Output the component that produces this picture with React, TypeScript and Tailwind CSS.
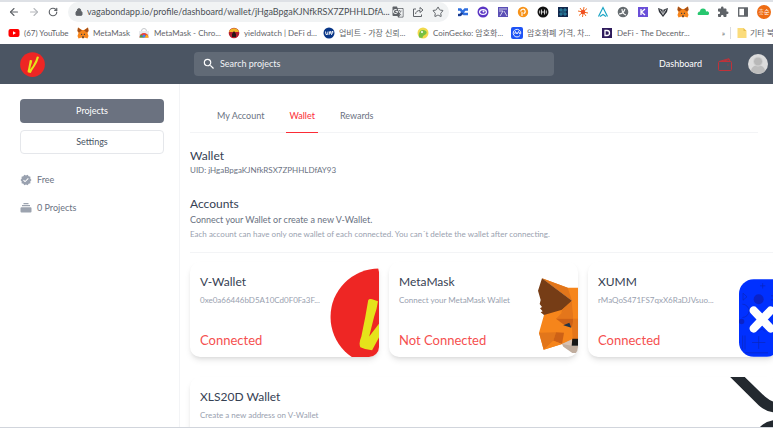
import type { ReactNode } from "react";
import { ArrowLeft, ArrowRight, Lock, RotateCw, Star } from "lucide-react";
import { MdExtension, MdGTranslate, MdSearch, MdVerified } from "react-icons/md";

function VLogo({ className, viewBox = "0 0 100 100" }: { className: string; viewBox?: string }) {
  return (
    <svg viewBox={viewBox} className={className} aria-hidden="true">
      <circle cx="50" cy="50" r="49.5" fill="#ee2624" />
      <path
        d="M39 33Q40 31 43 32L49 34Q48 42 45 50L40 70L50 57L62 34L67 19Q71 16 76 20Q70 42 60 56L50 71L43 84Q37 84 31 81Q29 77 32 70L36 50Z"
        fill="#e5e31b"
      />
    </svg>
  );
}

function FoxIcon() {
  return (
    <svg viewBox="0 0 24 24" className="size-3" aria-hidden="true">
      <path d="M2 1l8 5h4l8-5 1 7-2 4 2 6-2 5-6-2-2 2h-2l-2-2-6 2-2-5 2-6-2-4z" fill="#f6851b" />
      <path d="M2 1l8 6-6 4-3-3zM22 1l-8 6 6 4 3-3z" fill="#a4501a" />
      <path d="M8 13l3 2-3 1zM16 13l-3 2 3 1zM10 19h4l-1 3h-2z" fill="#233447" />
    </svg>
  );
}

function FoxArt() {
  return (
    <svg viewBox="474 100 120 225" className="mb-1 h-[75px] w-10 shrink-0 self-end" aria-hidden="true">
      <path d="M486 101L563 129H594V222L530 222L492 210L576 168Z" fill="#f6851b" />
      <path d="M486 101L563 129L576 168Z" fill="#e2761b" />
      <path d="M492 211L546 195L594 180V300L546 298L491 315L477 264Z" fill="#f6851b" />
      <path d="M486 101L576 168L546 195L492 211L482 203L488 200L480 191L486 187L479 178L482 166L474 138Z" fill="#763d16" />
      <path d="M546 195L576 168L560 192L544 206Z" fill="#e2761b" />
      <path d="M477 264L528 263L520 288L491 315Z" fill="#e2761b" />
      <path d="M528 263L552 264L546 298L520 288Z" fill="#cd6116" />
      <path d="M528 222L560 190L576 168L580 222Z" fill="#e4761b" />
      <path d="M528 222H580L578 248L552 240Z" fill="#cd6116" />
      <path d="M576 168L594 180V222H580Z" fill="#f6851b" />
      <path d="M580 222H594V282H578L576 250Z" fill="#e4761b" />
      <path d="M550 242L568 234L574 249Z" fill="#233447" />
      <path d="M491 315L520 288L546 298Z" fill="#f6851b" />
      <path d="M546 298L576 285V303H594V325H577L550 306Z" fill="#c0ad9e" />
      <path d="M546 298L576 284V303Z" fill="#d7c1b3" />
      <path d="M577 282H594V303H575Z" fill="#161616" />
    </svg>
  );
}

function XummArt() {
  return (
    <svg viewBox="506 105 114 233" className="h-[78px] w-[38px] shrink-0 self-end" aria-hidden="true">
      <rect x="506" y="105" width="233" height="233" rx="44" fill="#0030ff" />
      <g fill="none" stroke="#0a26b8" strokeWidth="2">
        <path d="M577 117v16M569 125h16M518 147l12 11-12 10zM516 180a20 20 0 0 1 0 40M602 155h18M602 167h18" />
        <path d="M565 276v38M545 295h40M517 274v42M524 274v42M525 326h68" />
        <path d="M560 262l16-8 8 8" />
      </g>
      <circle cx="565" cy="165" r="15" fill="#0a22c8" />
      <circle cx="514" cy="232" r="8" fill="#0a22c8" />
      <path d="M550 199L601 253M601 199L550 253" stroke="#fff" strokeWidth="25" strokeLinecap="round" />
    </svg>
  );
}

function XrpArt() {
  return (
    <svg viewBox="480 397 141 151" className="h-[50px] w-[47px] shrink-0" aria-hidden="true">
      <path d="M480 397H524L586 457Q602 471 621 474V505Q588 503 566 482Z" fill="#23292f" />
      <path d="M570 548Q588 529 621 526V548Z" fill="#23292f" />
    </svg>
  );
}

function Glyph({ children }: { children: ReactNode }) {
  return (
    <svg viewBox="0 0 12 12" className="size-3" aria-hidden="true">
      {children}
    </svg>
  );
}

const extensions: { name: string; icon: ReactNode }[] = [
  { name: "Swap", icon: <Glyph><path d="M1 3.500h2.500L7 8h4M1 9h2l5-5.500h3" fill="none" stroke="#2f6fe0" strokeWidth="2.400" /><path d="M1 9h2.500l2-2" fill="none" stroke="#1b3b8c" strokeWidth="2" /></Glyph> },
  { name: "Orbit", icon: <Glyph><circle cx="6" cy="6" r="5.500" fill="#5a35c4" /><ellipse cx="6" cy="6" rx="3.400" ry="2.400" fill="none" stroke="#fff" strokeWidth="1.200" /><circle cx="6.500" cy="5.500" r="1" fill="#fff" /></Glyph> },
  { name: "Grid", icon: <Glyph><path d="M1 1h10v10H1z" fill="#5a4fb5" /><path d="M2 3h8M2 5h4M7 5l3 5M3 10l3-5" stroke="#fff" strokeWidth=".7" fill="none" /></Glyph> },
  { name: "Pin", icon: <Glyph><circle cx="6" cy="6" r="5.200" fill="#f7931a" /><path d="M5 10V6M3.800 5.500a2.200 2.200 0 1 1 2.700 2" fill="none" stroke="#fff" strokeWidth="1.100" /></Glyph> },
  { name: "Hashpack", icon: <Glyph><circle cx="6" cy="6" r="5.500" fill="#111" /><path d="M4.500 3.500v5M7.500 3.500v5M4.500 6h3M2.700 4.500v3M9.300 4.500v3" stroke="#fff" strokeWidth=".8" /></Glyph> },
  { name: "Robot", icon: <Glyph><path d="M1 1h10v10H1z" fill="#12284c" /><path d="M3 3h2v2H3zM7 3h2v2H7zM3 7h2v2H3zM7 7h2v2H7zM5 6h2" fill="none" stroke="#3dc3df" strokeWidth=".6" /></Glyph> },
  { name: "Spark", icon: <Glyph><path d="M7 1L5.500 11M1 5l10 2M3 2l6 8M10 2.500l-8 7" stroke="#f26a21" strokeWidth="1" /><circle cx="6" cy="6" r="2.200" fill="#f04e23" /></Glyph> },
  { name: "Argent", icon: <Glyph><path d="M1.500 10.500L6 1.500l4.500 9M3 10.500l3-2 3 2" fill="none" stroke="#19a5c5" strokeWidth="1.200" /></Glyph> },
  { name: "Keplr", icon: <Glyph><circle cx="6" cy="6" r="5.300" fill="#666c70" /><path d="M2 8c3 0 5-2 6-5M5 3c0 3 1 5 4 6" stroke="#fff" strokeWidth="1.100" fill="none" /></Glyph> },
  { name: "Kaikas", icon: <Glyph><path d="M1 1h10v10H1z" fill="#6a4fd8" /><path d="M4 3v6M8 3L4.500 6 8 9" stroke="#fff" strokeWidth="1.300" fill="none" /></Glyph> },
  { name: "Venom", icon: <Glyph><path d="M1 2l3 1 2 1 2-1 3-1-1 4-4 5-4-5z" fill="#30343b" /><path d="M3 3.500l3 5 3-5M6 4v3" stroke="#fff" strokeWidth=".7" fill="none" /></Glyph> },
  { name: "MetaMask", icon: <FoxIcon /> },
  { name: "Cloud", icon: <Glyph><path d="M1 9a2.300 2.300 0 0 1 2-3.500 3 3 0 0 1 6 0A2 2 0 0 1 11 9z" fill="#27c76f" /></Glyph> },
  { name: "Extensions", icon: <MdExtension className="size-3 text-[#5f6368]" /> },
  { name: "Side panel", icon: <Glyph><path d="M1.700 2h8.600v8H1.700z" fill="none" stroke="#5f6368" strokeWidth="1.300" /><path d="M7 2h3.500v8H7z" fill="#5f6368" /></Glyph> },
];

const bookmarks: { label: string; width: string; icon: ReactNode }[] = [
  { label: "(67) YouTube", width: "w-[69px]", icon: <Glyph><rect x=".5" y="2" width="11" height="8" rx="2" fill="#f00" /><path d="M5 4.300L8 6 5 7.700z" fill="#fff" /></Glyph> },
  { label: "MetaMask", width: "w-[61px]", icon: <FoxIcon /> },
  { label: "MetaMask - Chro...", width: "w-[90px]", icon: <Glyph><path d="M1 4h10v6.500H1z" fill="#e8eaed" /><path d="M3.500 4a2.500 2.500 0 0 1 5 0" fill="none" stroke="#c5c8cc" /><path d="M1.500 10.500a4.500 4.500 0 0 1 9 0z" fill="#ea4335" /><path d="M1.500 10.500L3 7.500l3 3z" fill="#34a853" /><path d="M10.500 10.500L9 7.500l-3 3z" fill="#fbbc04" /><circle cx="6" cy="9" r="1.500" fill="#4285f4" /></Glyph> },
  { label: "yieldwatch | DeFi d...", width: "w-[95px]", icon: <Glyph><circle cx="6" cy="6" r="5.300" fill="#b5202d" /><path d="M1 5a5.200 5.200 0 0 1 10 0z" fill="#f1b52a" /><path d="M4 10V7l2-3 2 3v3z" fill="#2a1717" /></Glyph> },
  { label: "업비트 - 가장 신뢰...", width: "w-[94px]", icon: <Glyph><circle cx="6" cy="6" r="5.500" fill="#093687" /><path d="M2.500 4.500L3 7.500h1.500l.5-3M6 8l.7-3.500h1L7 7M8.500 8l.5-3.500h1L9.500 6.500" fill="none" stroke="#fff" strokeWidth=".9" /></Glyph> },
  { label: "CoinGecko: 암호화...", width: "w-[94px]", icon: <Glyph><circle cx="6" cy="6" r="5.500" fill="#f0d94c" /><path d="M2 10.500C1.500 6 3 2.500 6.500 3c3 .5 4 2.500 2.500 4S6 8 5.500 11z" fill="#76c043" /><circle cx="5" cy="5" r="1" fill="#fff" /></Glyph> },
  { label: "암호화폐 가격, 차...", width: "w-[90px]", icon: <Glyph><rect width="12" height="12" rx="2" fill="#1e53f5" /><path d="M9 8.500A3.800 3.800 0 1 1 9.800 6c0 1.500-1.500 1.500-1.500 0L7.500 4.500 6 7 4.500 4.500 3.700 7" fill="none" stroke="#fff" strokeWidth=".9" /></Glyph> },
  { label: "DeFi - The Decentr...", width: "w-[116px]", icon: <Glyph><path d="M1 1h10v10H1z" fill="#2f1c5c" /><path d="M4 3.500h2a2.500 2.500 0 0 1 0 5H4z" fill="none" stroke="#fff" strokeWidth="1.300" /></Glyph> },
];

function BrowserBar() {
  return (
    <div className="border-t-2 border-[#dee1e6] bg-white text-[#5f6368]">
      <div className="flex h-5 items-center">
        <div className="flex w-[68px] shrink-0 items-center gap-2 pl-2">
          <button aria-label="Back"><ArrowLeft className="size-3" strokeWidth={2.2} /></button>
          <button aria-label="Forward" className="text-[#b5b8bc]"><ArrowRight className="size-3" strokeWidth={2.2} /></button>
          <button aria-label="Reload"><RotateCw className="size-[10px]" strokeWidth={2.8} /></button>
        </div>
        <div className="flex h-5 min-w-0 flex-1 items-center rounded-full bg-[#f1f3f4] pr-[5px] pl-[7px]">
          <Lock className="size-2 shrink-0 fill-current" strokeWidth={3} />
          <input
            aria-label="Address"
            readOnly
            className="ml-1 min-w-0 flex-1 text-[9px] text-[#4b4f54] outline-none"
            defaultValue="vagabondapp.io/profile/dashboard/wallet/jHgaBpgaKJNfkRSX7ZPHHLDfA..."
          />
          <div className="flex shrink-0 items-center gap-2">
            <button aria-label="Translate"><MdGTranslate className="size-3" /></button>
            <button aria-label="Share">
              <Glyph>
                <path d="M4 3H1.500v7.500h8V8.500M3.500 8C4 5.500 5.500 4.500 8 4.500M8 4.500V6.500L11 4 8 1.500v2" fill="none" stroke="#5f6368" />
              </Glyph>
            </button>
            <button aria-label="Bookmark"><Star className="size-3" /></button>
          </div>
        </div>
        <div className="flex shrink-0 items-center gap-2 pr-[2px] pl-2">
          {extensions.map((e) => (
            <button key={e.name} aria-label={e.name}>{e.icon}</button>
          ))}
          <button className="size-[14px] rounded-full bg-[#ee6c13] text-[6px] leading-[14px] text-white">흥순</button>
        </div>
      </div>
      <nav className="flex h-[22px] items-center overflow-hidden pl-2 text-[8px] whitespace-nowrap">
        {bookmarks.map((b) => (
          <a key={b.label} href="#" className={`flex shrink-0 items-center gap-1 ${b.width}`}>
            {b.icon}
            {b.label}
          </a>
        ))}
        <button className="w-[13px] shrink-0">»</button>
        <a href="#" className="flex shrink-0 items-center gap-[2px] border-l border-[#dadce0] pl-[5px]">
          <Glyph><path d="M1.500 1h6l3 3v7h-9z" fill="#fbdc7b" /><path d="M7.500 1v3h3" fill="#e8bd4e" /></Glyph>
          기타 북
        </a>
      </nav>
    </div>
  );
}

function Header() {
  return (
    <header className="flex h-10 items-center bg-[#4b5563] pr-[5px] pl-5 text-white">
      <a href="#" aria-label="Home" className="w-[174px] shrink-0">
        <VLogo className="size-[25px]" />
      </a>
      <label className="flex h-6 w-[360px] items-center gap-1 rounded bg-[#616a76] px-2">
        <MdSearch className="size-[14px] shrink-0" />
        <input
          type="text"
          placeholder="Search projects"
          aria-label="Search projects"
          className="min-w-0 flex-1 text-[9px] outline-none placeholder:text-gray-100"
        />
      </label>
      <div className="ml-auto flex items-center gap-4">
        <a href="#" className="text-[9px]">Dashboard</a>
        <button aria-label="Wallet">
          <svg viewBox="0 0 14 13" className="h-[13px] w-[14px]" fill="none" stroke="#c0323a" aria-hidden="true">
            <rect x=".5" y="3.500" width="13" height="9" rx="1" />
            <path d="M1 3.500L11 .7l1 2.800M3 3.500l8-1.800M10 6.500v1" />
          </svg>
        </button>
        <button aria-label="Profile">
          <svg viewBox="0 0 20 20" className="size-5" aria-hidden="true">
            <circle cx="10" cy="10" r="10" fill="#dcdcdc" />
            <path d="M3 17a7 6 0 0 1 14 0 10 10 0 0 1-14 0z" fill="#bdbdbd" />
            <circle cx="10" cy="7.500" r="4.500" fill="#b8b8b8" stroke="#d4d4d4" />
          </svg>
        </button>
      </div>
    </header>
  );
}

function Sidebar() {
  return (
    <aside className="w-[180px] shrink-0 border-r border-gray-100 px-5 pt-[15px] pr-[15px] text-[9px] text-gray-500">
      <button className="block h-6 w-full rounded bg-[#6b7280] text-white">Projects</button>
      <button className="mt-[7px] block h-6 w-full rounded border border-gray-200 text-gray-600">Settings</button>
      <ul className="mt-5 space-y-4">
        <li className="flex h-3 items-center gap-[5px]">
          <MdVerified className="size-3 text-gray-400" />
          Free
        </li>
        <li className="flex h-3 items-center gap-[5px]">
          <svg viewBox="0 0 12 12" className="size-3" fill="#9ca3af" aria-hidden="true">
            <path d="M3.500 1h5v1.200h-5zM2 3h8v1.300H2zM1.500 5.200h9a1 1 0 0 1 1 1v3.300a1 1 0 0 1-1 1h-9a1 1 0 0 1-1-1V6.200a1 1 0 0 1 1-1z" />
          </svg>
          0 Projects
        </li>
      </ul>
    </aside>
  );
}

interface WalletCardProps { title: string; detail: string; status: string; art: ReactNode; }

function WalletCard({ title, detail, status, art }: WalletCardProps) {
  return (
    <article className="flex h-[95px] w-[189px] shrink-0 justify-between overflow-hidden rounded-[10px] bg-white shadow-md">
      <div className="flex min-w-0 flex-col pt-3 pl-[10px] whitespace-nowrap">
        <h3 className="text-[12px] leading-4 text-gray-700">{title}</h3>
        <p className="mt-1 text-[8px] leading-3 text-gray-400">{detail}</p>
        <p className="mt-6 text-[13px] leading-5 text-[#f5504f]">{status}</p>
      </div>
      {art}
    </article>
  );
}

const tabs = ["My Account", "Wallet", "Rewards"];

const wallets: WalletCardProps[] = [
  { title: "V-Wallet", detail: "0xe0a66446bD5A10Cd0F0Fa3F...", status: "Connected", art: <VLogo className="h-[89px] w-[49px] shrink-0 self-end" viewBox="0 0 50 91" /> },
  { title: "MetaMask", detail: "Connect your MetaMask Wallet", status: "Not Connected", art: <FoxArt /> },
  { title: "XUMM", detail: "rMaQoS471FS7qxX6RaDJVsuo...", status: "Connected", art: <XummArt /> },
];

export default function App() {
  return (
    <div className="flex h-screen flex-col overflow-hidden border-b border-gray-300 bg-white font-[Lato,'Noto_Sans_CJK_KR',sans-serif]">
      <BrowserBar />
      <Header />
      <div className="flex min-h-0 flex-1">
        <Sidebar />
        <main className="min-w-0 flex-1 overflow-hidden pl-[10px]">
          <nav className="mt-4 mr-[15px] flex gap-[19px] border-b border-gray-100 pl-6 text-[9px] text-gray-500">
            {tabs.map((t) => (
              <a
                key={t}
                href="#"
                className={t === "Wallet" ? "-mb-px border-b border-red-500 px-[3px] leading-8 text-red-500" : "px-[3px] leading-8"}
              >
                {t}
              </a>
            ))}
          </nav>
          <section className="mt-[15px]">
            <h2 className="text-[12px] leading-4 text-gray-700">Wallet</h2>
            <p className="text-[8px] leading-3 text-gray-500">UID: jHgaBpgaKJNfkRSX7ZPHHLDfAY93</p>
          </section>
          <section className="mt-5">
            <h2 className="text-[12px] leading-4 text-gray-700">Accounts</h2>
            <p className="text-[9px] leading-4 text-gray-500">Connect your Wallet or create a new V-Wallet.</p>
            <p className="text-[8px] leading-3 text-gray-400">Each account can have only one wallet of each connected. You can´t delete the wallet after connecting.</p>
            <div className="mt-3 border-t border-gray-100 pt-[9px]">
              <div className="flex gap-[10px]">
                {wallets.map((w) => (
                  <WalletCard key={w.title} {...w} />
                ))}
              </div>
              <article className="mt-5 flex h-[95px] w-[587px] justify-between overflow-hidden rounded-[10px] shadow-md">
                <div className="pt-3 pl-[10px]">
                  <h3 className="text-[12px] leading-4 text-gray-700">XLS20D Wallet</h3>
                  <p className="mt-1 text-[8px] leading-3 text-gray-400">Create a new address on V-Wallet</p>
                </div>
                <XrpArt />
              </article>
            </div>
          </section>
        </main>
      </div>
    </div>
  );
}
